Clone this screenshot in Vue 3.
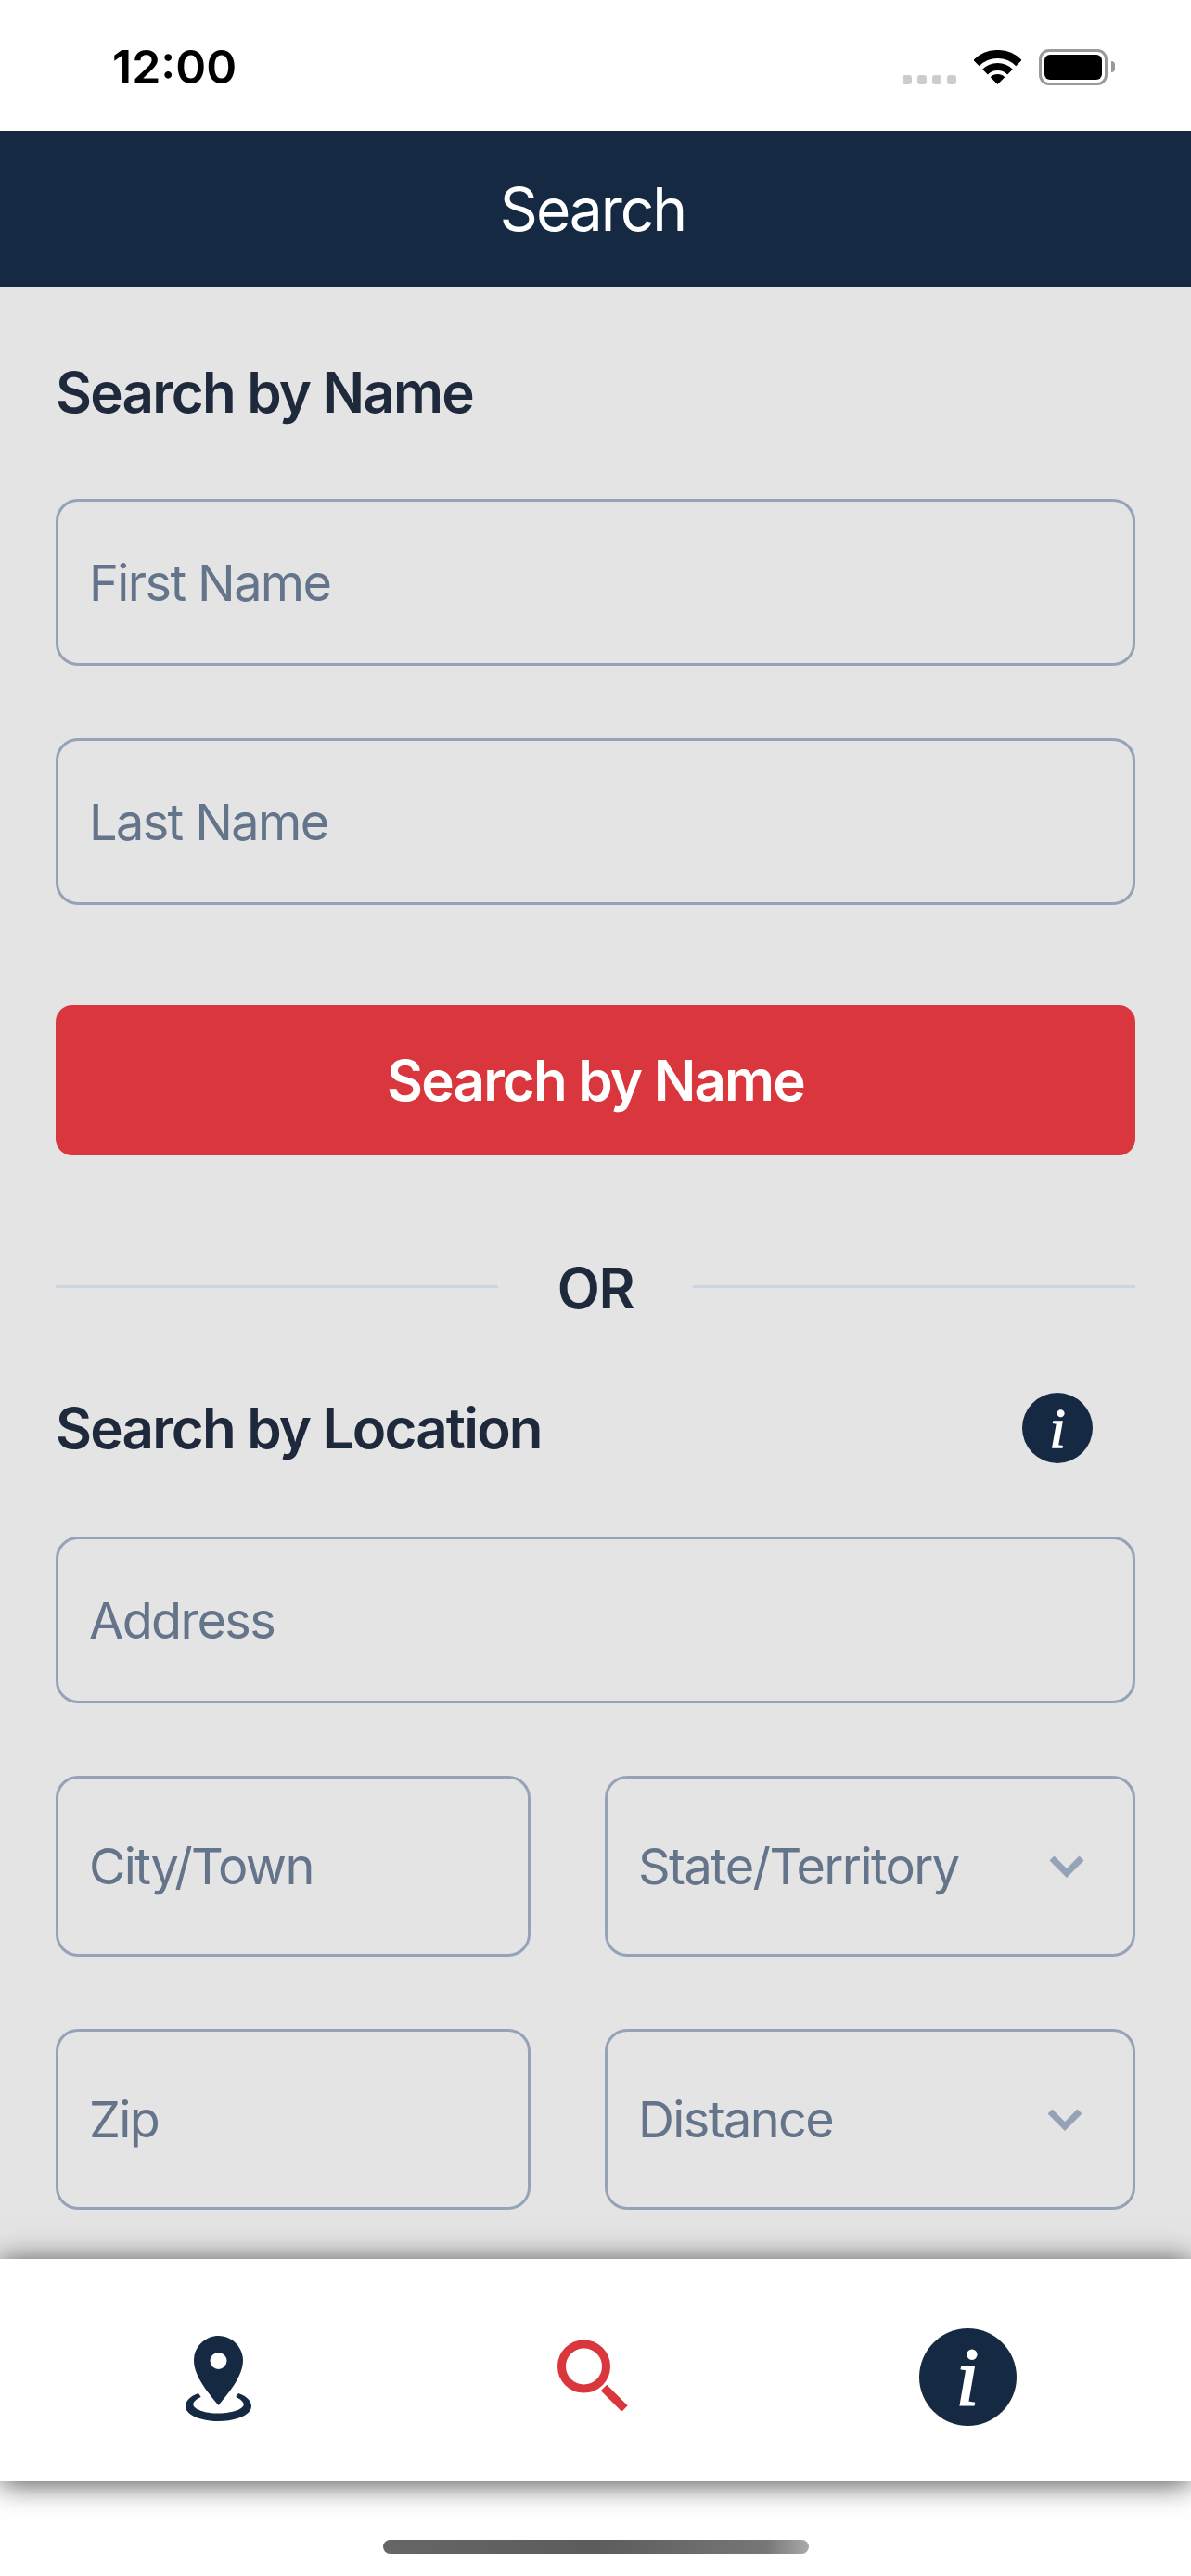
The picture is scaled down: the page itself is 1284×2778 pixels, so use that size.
<template>
  <div class="screen">
    <div class="status-bar">
      <span class="time">12:00</span>
      <div class="status-icons">
        <div class="signal">
          <i v-for="n in 4" :key="n"></i>
        </div>
        <svg class="wifi" viewBox="0 0 51 37">
          <path d="M2.5 14A32.5 32.5 0 0 1 48.5 14" fill="none" stroke="#000" stroke-width="9" />
          <path d="M12.06 23.56A19 19 0 0 1 38.94 23.56" fill="none" stroke="#000" stroke-width="8" />
          <path d="M25.5 37L17.72 29.22A11 11 0 0 1 33.28 29.22Z" fill="#000" />
        </svg>
        <div class="battery"><div class="battery-fill"></div></div>
        <div class="battery-nub"></div>
      </div>
    </div>

    <header class="title-bar">Search</header>

    <main class="content">
      <h2 class="heading">Search by Name</h2>
      <div class="field name-first">First Name</div>
      <div class="field name-last">Last Name</div>
      <button class="search-btn">Search by Name</button>

      <div class="divider">
        <span class="divider-line"></span>
        <span class="divider-text">OR</span>
        <span class="divider-line"></span>
      </div>

      <div class="location-head">
        <h2 class="heading">Search by Location</h2>
        <span class="info-badge small">i</span>
      </div>

      <div class="field address">Address</div>

      <div class="field-row">
        <div class="field tall city">City/Town</div>
        <div class="field tall select">
          <span>State/Territory</span>
          <svg class="chevron" viewBox="0 0 38 24"><path d="M3 3L19 19L35 3" /></svg>
        </div>
      </div>
      <div class="field-row">
        <div class="field tall city">Zip</div>
        <div class="field tall select distance">
          <span>Distance</span>
          <svg class="chevron" viewBox="0 0 38 24"><path d="M3 3L19 19L35 3" /></svg>
        </div>
      </div>
    </main>

    <nav class="tab-bar">
      <div class="tab">
        <svg class="pin" viewBox="0 0 71 92">
          <path fill-rule="evenodd" d="M35.5 0C50 0 62 12 62 26.500C62 45 44 64 35.500 75C27 64 9 45 9 26.500C9 12 21 0 35.500 0ZM35.500 18A9 9 0 1 0 35.500 36A9 9 0 1 0 35.500 18Z" />
          <path d="M14 62C5 65 0 70 0 76C0 85 16 92 35.500 92C55 92 71 85 71 76C71 70 66 65 57 62L54.300 66C59 68 62.700 71 62.700 74C62.700 79 50 83.600 35.500 83.600C21 83.600 8.300 79 8.300 74C8.300 71 12 68 16.700 66Z" />
        </svg>
      </div>
      <div class="tab">
        <svg class="magnifier" viewBox="0 0 76 77">
          <circle cx="28.500" cy="29" r="24" />
          <path d="M50 52L72.500 74.500" />
        </svg>
      </div>
      <div class="tab">
        <span class="info-badge large">i</span>
      </div>
    </nav>

    <div class="home-area">
      <div class="home-indicator"></div>
    </div>
  </div>
</template>

<script setup>
</script>

<style>
html,
body {
  margin: 0;
  background: #fff;
}
</style>

<style scoped>
.screen {
  width: 1284px;
  height: 2778px;
  overflow: hidden;
  display: flex;
  flex-direction: column;
  font-family: Inter, "Liberation Sans", sans-serif;
  background: #fff;
}

/* status bar */
.status-bar {
  height: 141px;
  box-sizing: border-box;
  padding: 42px 82px 0 121px;
  display: flex;
  justify-content: space-between;
  align-items: flex-start;
}

.time {
  font-size: 50px;
  font-weight: 600;
  line-height: 60px;
  color: #000;
}

.status-icons {
  display: flex;
  align-items: flex-start;
  margin-top: 11px;
}

.signal {
  display: flex;
  gap: 6px;
  margin-top: 28px;
  margin-right: 19px;
}

.signal i {
  width: 10px;
  height: 10px;
  border-radius: 3px;
  background: #ccc;
}

.wifi {
  width: 51px;
  height: 37px;
  margin-top: 1px;
  margin-right: 19px;
}

.battery {
  width: 74px;
  height: 39px;
  box-sizing: border-box;
  border: 3px solid #999;
  border-radius: 11px;
  padding: 3px;
}

.battery-fill {
  height: 100%;
  background: #000;
  border-radius: 6px;
}

.battery-nub {
  width: 4px;
  height: 12px;
  margin: 13px 0 0 4px;
  background: #999;
  border-radius: 0 4px 4px 0;
}

/* title */
.title-bar {
  height: 169px;
  box-sizing: border-box;
  padding-right: 6px;
  display: flex;
  align-items: center;
  justify-content: center;
  background: #152a42;
  color: #fff;
  font-size: 64px;
  letter-spacing: -2px;
}

/* form */
.content {
  height: 2126px;
  box-sizing: border-box;
  padding: 81px 60px 0;
  background: #e4e4e4;
  overflow: hidden;
}

.heading {
  margin: 0;
  font-size: 60px;
  font-weight: 600;
  line-height: 64px;
  letter-spacing: -1.8px;
  color: #1e293b;
}

.field {
  height: 180px;
  box-sizing: border-box;
  border: 3px solid #94a3b8;
  border-radius: 24px;
  padding: 0 33px;
  display: flex;
  align-items: center;
  justify-content: space-between;
  font-size: 54px;
  letter-spacing: -1.6px;
  color: #64748b;
}

.name-first {
  margin-top: 83px;
}

.name-last {
  margin-top: 78px;
}

.search-btn {
  display: block;
  width: 100%;
  height: 162px;
  margin-top: 108px;
  border: none;
  border-radius: 18px;
  background: #da363d;
  color: #fff;
  font-family: inherit;
  font-size: 60px;
  font-weight: 600;
  letter-spacing: -1.8px;
}

.divider {
  height: 64px;
  margin-top: 111px;
  display: flex;
  align-items: center;
}

.divider-line {
  flex: 1;
  height: 3px;
  background: #cbd5e1;
  margin-top: -4px;
}

.divider-text {
  width: 210px;
  text-align: center;
  font-size: 60px;
  font-weight: 600;
  letter-spacing: -1.5px;
  color: #1e293b;
}

.location-head {
  height: 76px;
  margin-top: 81px;
  padding-right: 46px;
  display: flex;
  align-items: center;
  justify-content: space-between;
}

.info-badge {
  display: flex;
  align-items: center;
  justify-content: center;
  flex-shrink: 0;
  border-radius: 50%;
  background: #152a42;
  color: #fff;
  font-family: "Liberation Serif", serif;
  font-style: italic;
}

.info-badge.small {
  width: 76px;
  height: 76px;
  font-size: 62px;
  -webkit-text-stroke: 1.5px #fff;
}

.info-badge.large {
  width: 105px;
  height: 105px;
  font-size: 88px;
  -webkit-text-stroke: 2px #fff;
}

.address {
  margin-top: 79px;
}

.field-row {
  display: grid;
  grid-template-columns: 512px 572px;
  justify-content: space-between;
  margin-top: 78px;
}

.tall {
  height: 195px;
}

.chevron {
  width: 38px;
  height: 24px;
  margin-right: 19px;
  fill: none;
  stroke: #94a3b8;
  stroke-width: 7;
}

.distance .chevron {
  margin-right: 21px;
}

/* tabs */
.tab-bar {
  position: relative;
  height: 240px;
  box-sizing: border-box;
  padding: 75px 0 0 33px;
  display: grid;
  grid-template-columns: repeat(3, 404px);
  align-items: start;
  background: #fff;
  box-shadow: 0 3px 30px rgba(0, 0, 0, 0.7);
}

.tab {
  height: 105px;
  display: flex;
  align-items: center;
  justify-content: center;
}

.pin {
  width: 71px;
  height: 92px;
  margin-top: 3px;
  fill: #152a42;
}

.magnifier {
  width: 76px;
  height: 77px;
  margin-top: -4px;
  fill: none;
  stroke: #da363d;
  stroke-width: 9;
}

.home-area {
  flex: 1;
  display: flex;
  justify-content: center;
  padding-top: 63px;
}

.home-indicator {
  width: 459px;
  height: 15px;
  border-radius: 8px;
  background: linear-gradient(90deg, #666 0%, #5c5c5c 50%, #777 90%, #aaa 100%);
}
</style>
